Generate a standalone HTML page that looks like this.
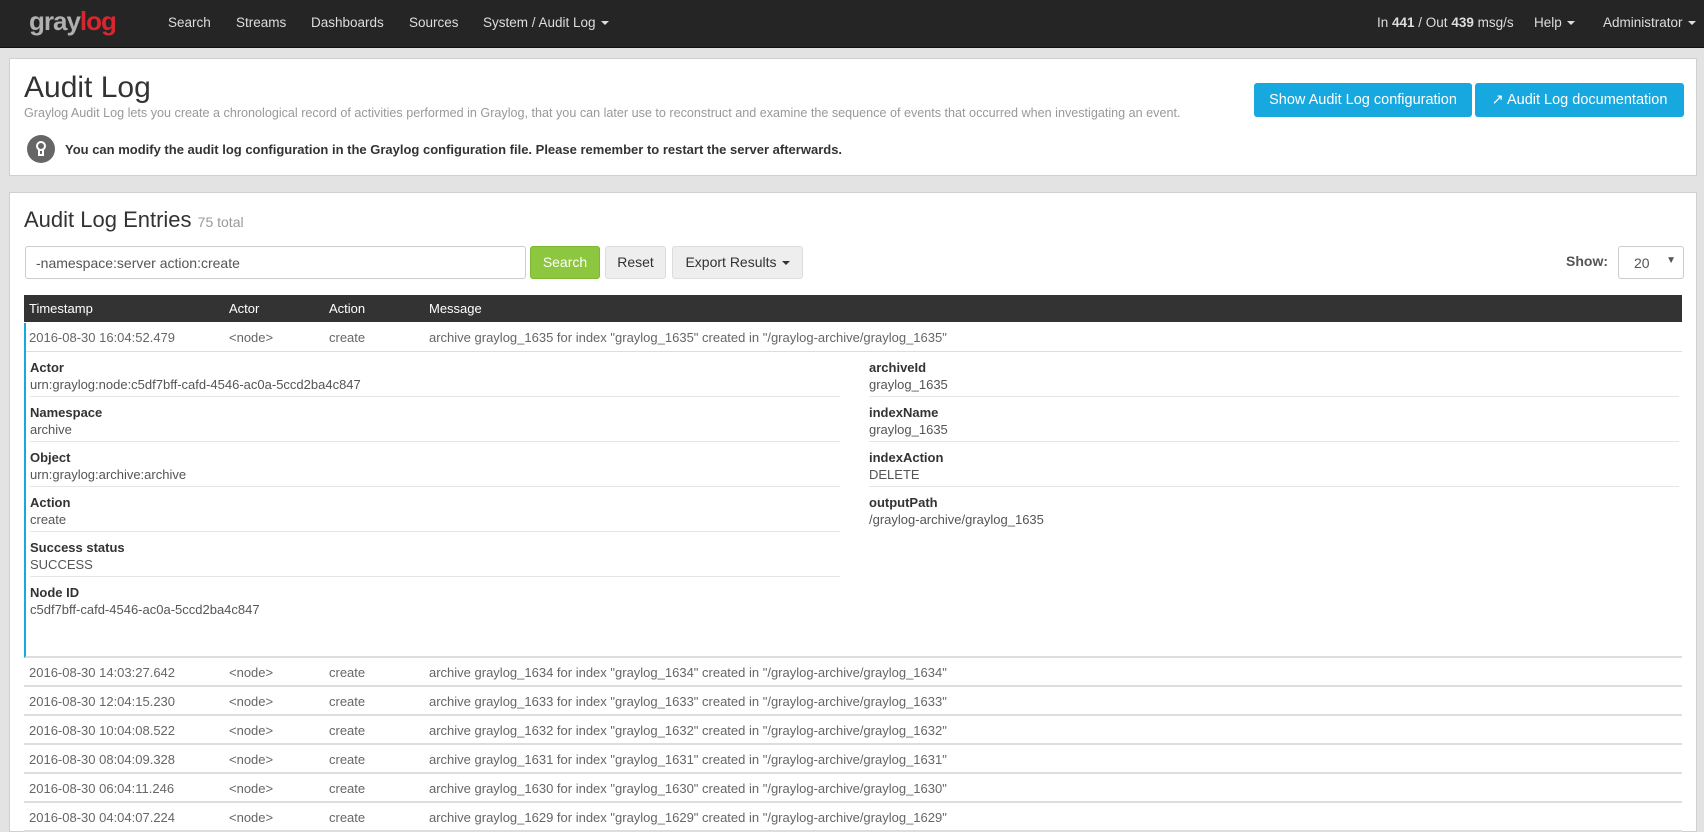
<!DOCTYPE html>
<html><head><style>
*{box-sizing:border-box;margin:0;padding:0}
body{width:1704px;height:818px;overflow:hidden;background:#e3e3e3;font-family:"Liberation Sans",sans-serif;font-size:13px;color:#555;position:relative}
.abs{position:absolute;white-space:nowrap}
.nav{position:absolute;left:0;top:0;width:1704px;height:48px;background:#252525;border-bottom:1px solid #111}
.nav .abs{color:#ddd;font-size:13.5px;top:15px}
.car{display:inline-block;width:0;height:0;border-left:4px solid transparent;border-right:4px solid transparent;border-top:4px solid #ddd;vertical-align:middle;margin-left:5px}
.panel{position:absolute;left:9px;width:1688px;background:#fff;border:1px solid #d0d0d0}
.btn{position:absolute;background:#17a8e0;color:#fff;border-radius:3px;font-size:14.5px;text-align:center;line-height:34px}
.lbl{font-weight:bold;color:#333}
.row{position:absolute;left:24px;width:1658px;height:29px;border-bottom:2px solid #ddd;color:#666}
.row span{position:absolute;top:7px}
.det{position:absolute;width:810px;height:45px;border-bottom:1px solid #e5e5e5}
.det .lbl{position:absolute;top:8px}
.det .v{position:absolute;top:25px;color:#555}
</style></head><body>
<div class="nav">
<div class="abs" style="left:29px;top:6px;font-size:26px;font-weight:bold;letter-spacing:-1px;color:#b0b0b0">gray<span style="color:#d8262f">log</span></div>
<div class="abs" style="left:168px">Search</div>
<div class="abs" style="left:236px">Streams</div>
<div class="abs" style="left:311px">Dashboards</div>
<div class="abs" style="left:409px">Sources</div>
<div class="abs" style="left:483px">System / Audit Log<span class="car"></span></div>
<div class="abs" style="left:1377px">In <b>441</b> / Out <b>439</b> msg/s</div>
<div class="abs" style="left:1534px">Help<span class="car"></span></div>
<div class="abs" style="left:1603px">Administrator<span class="car"></span></div>
</div>

<div class="panel" style="top:58px;height:118px">
<div class="abs" style="left:14px;top:12px;font-size:30px;color:#333">Audit Log</div>
<div class="abs" style="left:14px;top:47px;font-size:12.6px;color:#999">Graylog Audit Log lets you create a chronological record of activities performed in Graylog, that you can later use to reconstruct and examine the sequence of events that occurred when investigating an event.</div>
<div class="abs" style="left:17px;top:76px;width:28px;height:28px;border-radius:50%;background:#666"><div style="position:absolute;left:9px;top:6px;width:10px;height:10px;border:2px solid #fff;border-radius:50%"></div><div style="position:absolute;left:11px;top:15px;width:6px;height:6px;border:2px solid #fff;border-top:none"></div></div>
<div class="abs lbl" style="left:55px;top:83px;font-size:13px">You can modify the audit log configuration in the Graylog configuration file. Please remember to restart the server afterwards.</div>
<div class="btn" style="left:1244px;top:24px;width:218px">Show Audit Log configuration</div>
<div class="btn" style="left:1465px;top:24px;width:209px">&#x2197;&#xFE0E; Audit Log documentation</div>
</div>

<div class="panel" style="top:192px;height:640px">
<div class="abs" style="left:14px;top:14px;font-size:22px;color:#333">Audit Log Entries <span style="font-size:14px;color:#999">75 total</span></div>
<div class="abs" style="left:15px;top:53px;width:501px;height:33px;border:1px solid #ccc;border-radius:3px;padding:8px 10px;font-size:14px;color:#555">-namespace:server action:create</div>
<div class="abs" style="left:520px;top:53px;width:70px;height:33px;background:#8dc63f;border:1px solid #7db62f;border-radius:3px;color:#fff;font-size:14px;text-align:center;line-height:31px">Search</div>
<div class="abs" style="left:595px;top:53px;width:61px;height:33px;background:#eee;border:1px solid #ddd;border-radius:3px;color:#333;font-size:14px;text-align:center;line-height:31px">Reset</div>
<div class="abs" style="left:662px;top:53px;width:131px;height:33px;background:#eee;border:1px solid #ddd;border-radius:3px;color:#333;font-size:14px;text-align:center;line-height:31px">Export Results<span class="car" style="border-top-color:#333"></span></div>
<div class="abs lbl" style="left:1556px;top:60px;font-size:14px;color:#555">Show:</div>
<div class="abs" style="left:1608px;top:53px;width:66px;height:33px;border:1px solid #ccc;border-radius:3px;padding:8px 15px;font-size:14px;color:#555">20<span style="position:absolute;right:7px;top:8px;font-size:10px">&#9660;</span></div>
</div>

<div class="abs" style="left:24px;top:295px;width:1658px;height:27px;background:#333;color:#fff;font-size:13px">
<span class="abs" style="left:5px;top:6px">Timestamp</span><span class="abs" style="left:205px;top:6px">Actor</span><span class="abs" style="left:305px;top:6px">Action</span><span class="abs" style="left:405px;top:6px">Message</span></div>

<div class="abs" style="left:24px;top:323px;width:1658px;height:335px;border-left:2px solid #17a8e0;border-bottom:2px solid #ddd"></div>
<div class="row" style="top:323px;border-bottom:1px solid #ddd;left:26px;width:1656px"><span style="left:3px">2016-08-30 16:04:52.479</span><span style="left:203px">&lt;node&gt;</span><span style="left:303px">create</span><span style="left:403px">archive graylog_1635 for index "graylog_1635" created in "/graylog-archive/graylog_1635"</span></div>

<div class="det" style="left:30px;top:352px"><div class="lbl">Actor</div><div class="v">urn:graylog:node:c5df7bff-cafd-4546-ac0a-5ccd2ba4c847</div></div>
<div class="det" style="left:30px;top:397px"><div class="lbl">Namespace</div><div class="v">archive</div></div>
<div class="det" style="left:30px;top:442px"><div class="lbl">Object</div><div class="v">urn:graylog:archive:archive</div></div>
<div class="det" style="left:30px;top:487px"><div class="lbl">Action</div><div class="v">create</div></div>
<div class="det" style="left:30px;top:532px"><div class="lbl">Success status</div><div class="v">SUCCESS</div></div>
<div class="det" style="left:30px;top:577px;border:none"><div class="lbl">Node ID</div><div class="v">c5df7bff-cafd-4546-ac0a-5ccd2ba4c847</div></div>

<div class="det" style="left:869px;top:352px"><div class="lbl">archiveId</div><div class="v">graylog_1635</div></div>
<div class="det" style="left:869px;top:397px"><div class="lbl">indexName</div><div class="v">graylog_1635</div></div>
<div class="det" style="left:869px;top:442px"><div class="lbl">indexAction</div><div class="v">DELETE</div></div>
<div class="det" style="left:869px;top:487px;border:none"><div class="lbl">outputPath</div><div class="v">/graylog-archive/graylog_1635</div></div>

<div class="row" style="top:658px"><span style="left:5px">2016-08-30 14:03:27.642</span><span style="left:205px">&lt;node&gt;</span><span style="left:305px">create</span><span style="left:405px">archive graylog_1634 for index "graylog_1634" created in "/graylog-archive/graylog_1634"</span></div>
<div class="row" style="top:687px"><span style="left:5px">2016-08-30 12:04:15.230</span><span style="left:205px">&lt;node&gt;</span><span style="left:305px">create</span><span style="left:405px">archive graylog_1633 for index "graylog_1633" created in "/graylog-archive/graylog_1633"</span></div>
<div class="row" style="top:716px"><span style="left:5px">2016-08-30 10:04:08.522</span><span style="left:205px">&lt;node&gt;</span><span style="left:305px">create</span><span style="left:405px">archive graylog_1632 for index "graylog_1632" created in "/graylog-archive/graylog_1632"</span></div>
<div class="row" style="top:745px"><span style="left:5px">2016-08-30 08:04:09.328</span><span style="left:205px">&lt;node&gt;</span><span style="left:305px">create</span><span style="left:405px">archive graylog_1631 for index "graylog_1631" created in "/graylog-archive/graylog_1631"</span></div>
<div class="row" style="top:774px"><span style="left:5px">2016-08-30 06:04:11.246</span><span style="left:205px">&lt;node&gt;</span><span style="left:305px">create</span><span style="left:405px">archive graylog_1630 for index "graylog_1630" created in "/graylog-archive/graylog_1630"</span></div>
<div class="row" style="top:803px"><span style="left:5px">2016-08-30 04:04:07.224</span><span style="left:205px">&lt;node&gt;</span><span style="left:305px">create</span><span style="left:405px">archive graylog_1629 for index "graylog_1629" created in "/graylog-archive/graylog_1629"</span></div>
</body></html>
